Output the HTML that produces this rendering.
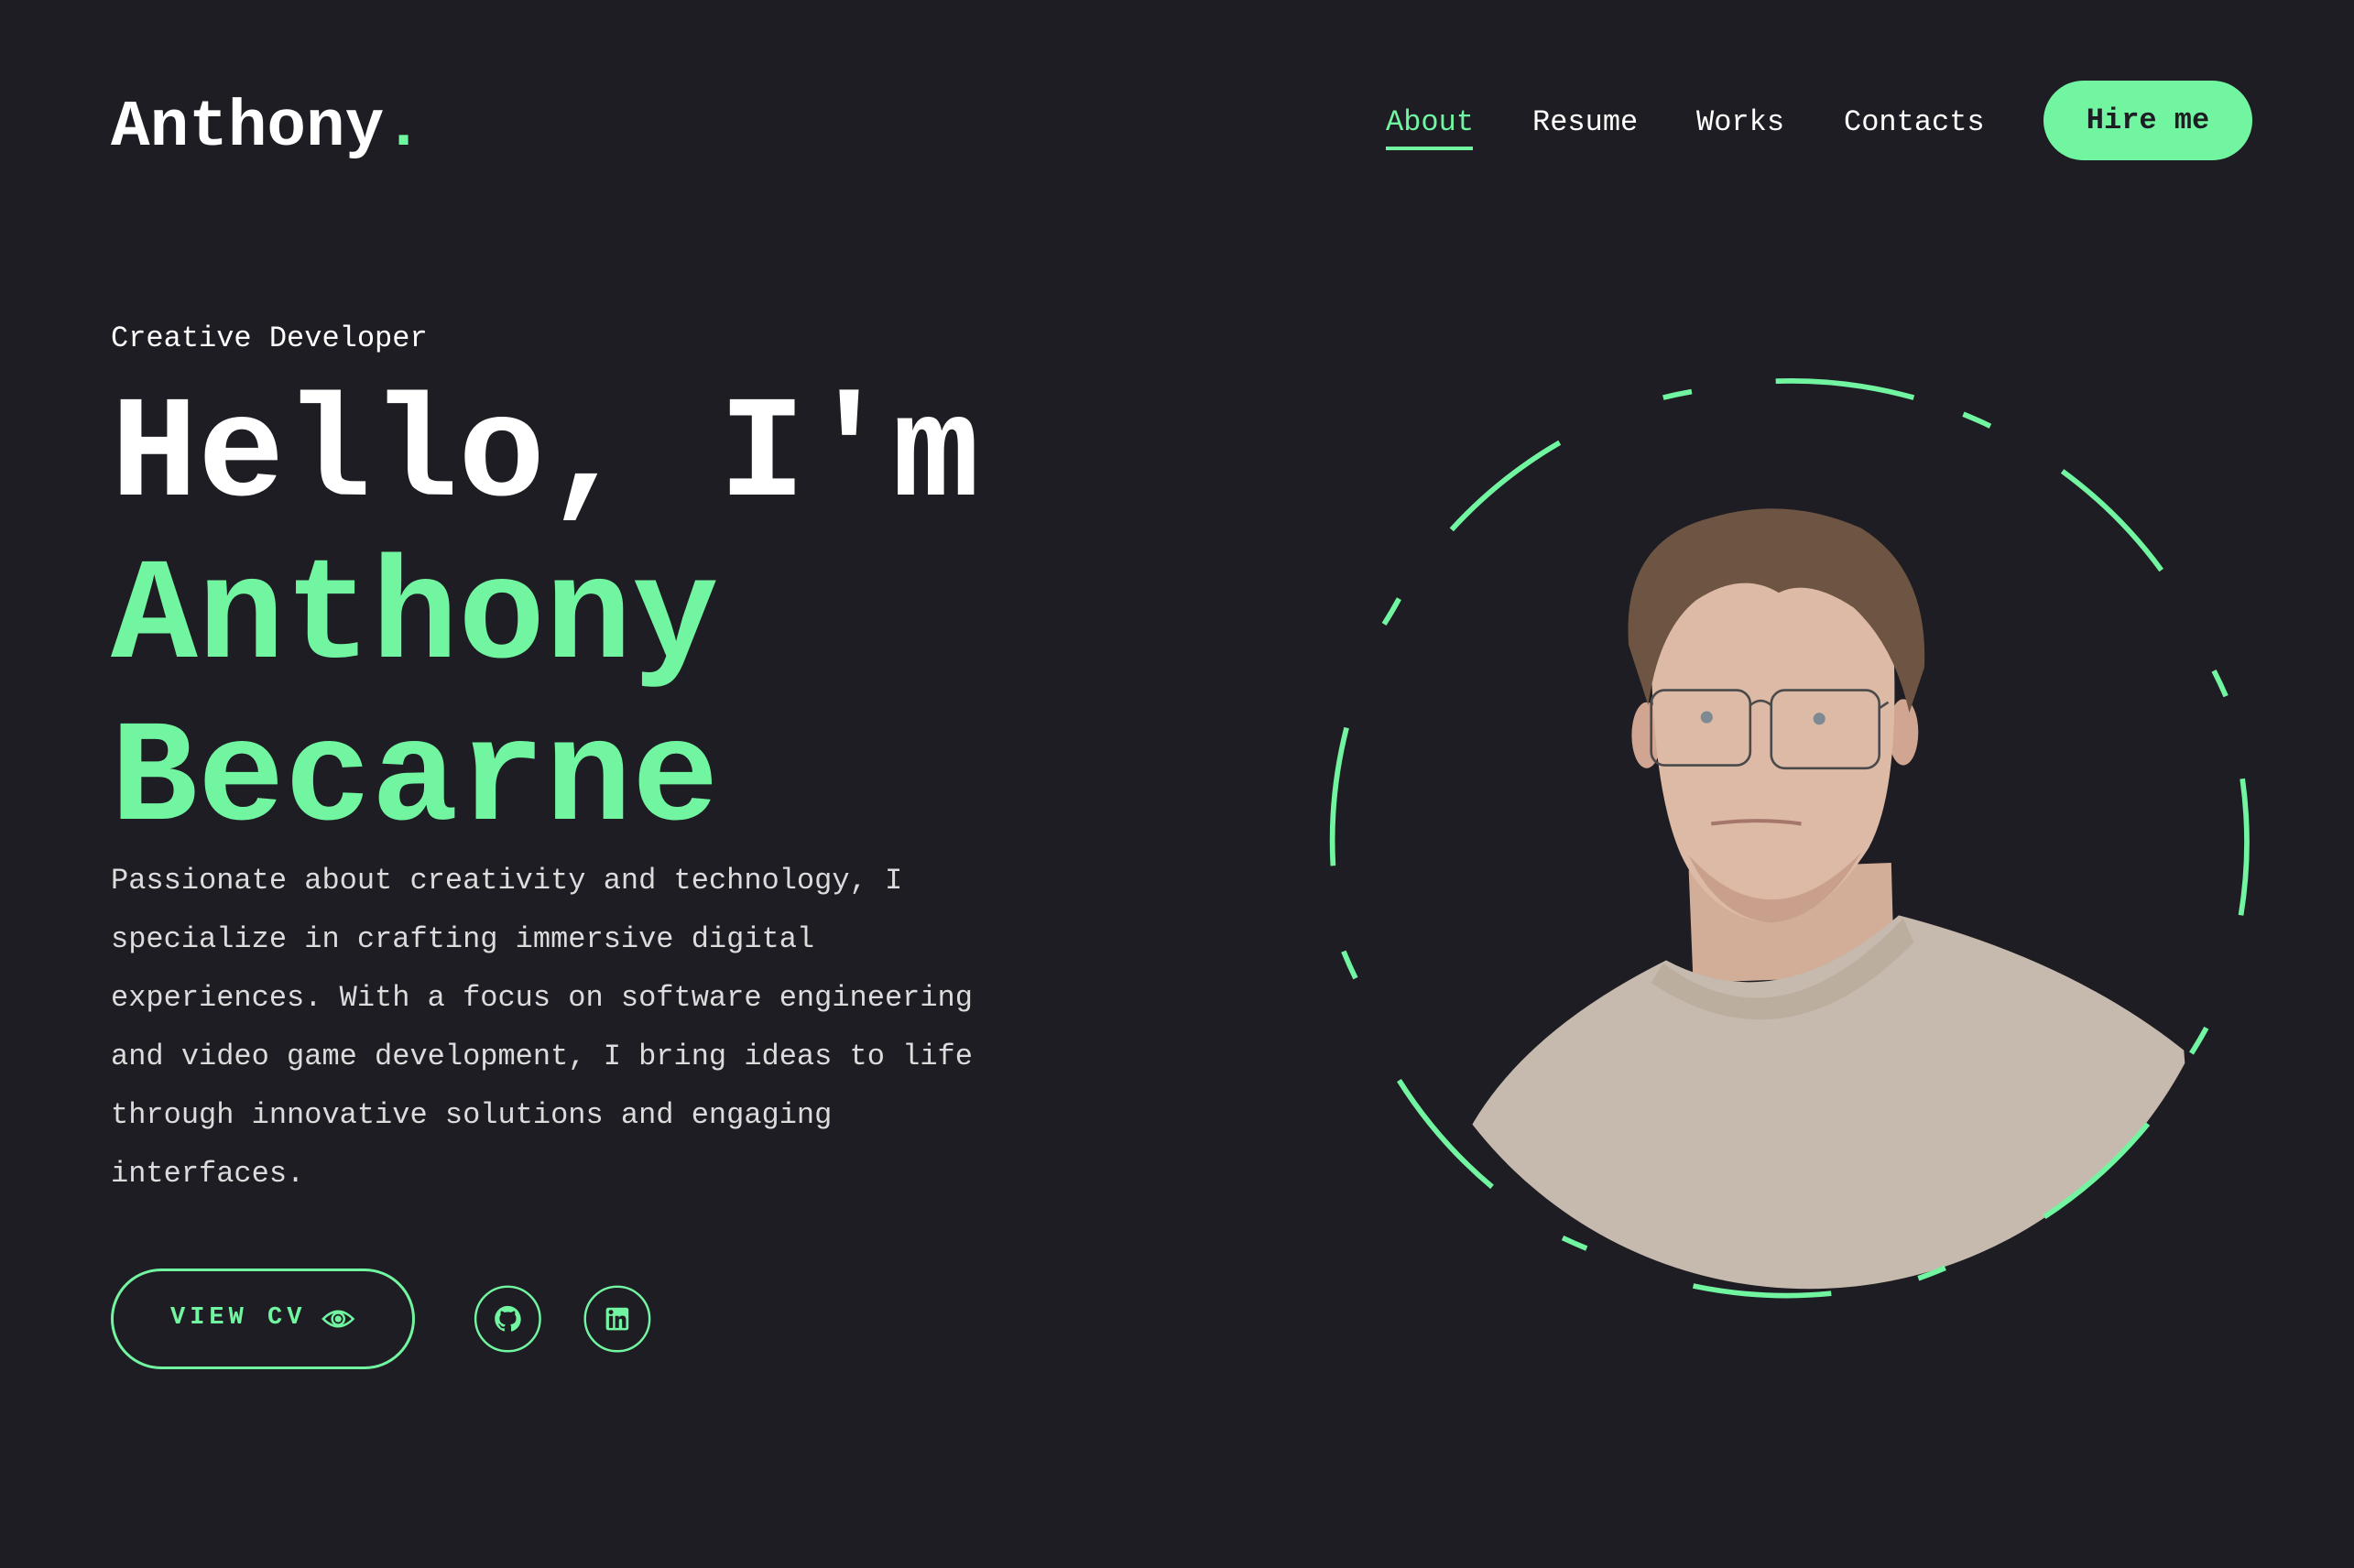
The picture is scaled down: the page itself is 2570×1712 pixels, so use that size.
<!DOCTYPE html>
<html><head><meta charset="utf-8"><style>
html,body{margin:0;padding:0;background:#1d1d23;}
body{width:2570px;height:1712px;position:relative;overflow:hidden;font-family:"Liberation Mono","DejaVu Sans Mono",monospace;color:#fff;}
.a{position:absolute;white-space:nowrap;line-height:1;}
.g{color:#72f5a1;}
</style></head><body>
<div class="a" style="left:121px;top:105px;font-size:71px;font-weight:bold;">Anthony<span class="g">.</span></div>
<div class="a g" style="left:1513px;top:118px;font-size:32px;">About</div>
<div style="position:absolute;left:1513px;top:160px;width:95px;height:4px;background:#72f5a1"></div>
<div class="a" style="left:1673px;top:118px;font-size:32px;">Resume</div>
<div class="a" style="left:1852px;top:118px;font-size:32px;">Works</div>
<div class="a" style="left:2013px;top:118px;font-size:32px;">Contacts</div>
<div style="position:absolute;left:2231px;top:88px;width:228px;height:87px;border-radius:44px;background:#72f5a1;color:#1d1d23;font-size:32px;font-weight:bold;display:flex;align-items:center;justify-content:center;">Hire me</div>

<div class="a" style="left:121px;top:354px;font-size:32px;">Creative Developer</div>
<div class="a" style="left:121px;top:420px;font-size:158px;font-weight:bold;">Hello, I'm</div>
<div class="a g" style="left:121px;top:597px;font-size:158px;font-weight:bold;">Anthony</div>
<div class="a g" style="left:121px;top:774px;font-size:158px;font-weight:bold;">Becarne</div>
<div style="position:absolute;left:121px;top:930px;font-size:32px;line-height:64px;color:#dcdcdc;white-space:nowrap;">Passionate about creativity and technology, I<br>specialize in crafting immersive digital<br>experiences. With a focus on software engineering<br>and video game development, I bring ideas to life<br>through innovative solutions and engaging<br>interfaces.</div>

<div style="position:absolute;left:121px;top:1385px;width:326px;height:104px;border:3px solid #72f5a1;border-radius:56px;"></div>
<div class="a g" style="left:186px;top:1426px;font-size:27px;font-weight:bold;letter-spacing:5px;">VIEW CV</div>

<svg style="position:absolute;left:0;top:0" width="2570" height="1712" viewBox="0 0 1568 1045">
  <defs>
    <clipPath id="cp"><circle cx="1205" cy="575" r="284"/></clipPath>
  </defs>
  <g fill="none" stroke="#72f5a1" stroke-width="1.5">
    <path d="M215 879 Q225 869 235 879 Q225 889 215 879 Z"/>
    <circle cx="225" cy="879" r="4"/>
  </g>
  <circle cx="225" cy="879" r="2.2" fill="#72f5a1"/>
  <circle cx="338" cy="879" r="21.5" fill="none" stroke="#72f5a1" stroke-width="1.5"/>
  <circle cx="411" cy="879" r="21.5" fill="none" stroke="#72f5a1" stroke-width="1.5"/>
  <g transform="translate(329,870) scale(0.75)" fill="#72f5a1">
    <path d="M12 .5C5.6.5.5 5.6.5 12c0 5.1 3.3 9.4 7.9 10.9.6.1.8-.2.8-.6v-2c-3.2.7-3.900-1.500-3.900-1.500-.5-1.300-1.300-1.700-1.300-1.700-1-.7.1-.7.1-.7 1.200.1 1.800 1.200 1.800 1.200 1 1.800 2.700 1.300 3.400 1 .1-.8.4-1.300.7-1.600-2.600-.3-5.300-1.300-5.300-5.700 0-1.300.5-2.300 1.200-3.100-.1-.3-.5-1.500.1-3.100 0 0 1-.3 3.200 1.200.9-.3 1.900-.4 2.900-.4s2 .1 2.900.4c2.200-1.500 3.200-1.200 3.200-1.200.6 1.600.2 2.800.1 3.100.7.8 1.200 1.800 1.200 3.100 0 4.400-2.700 5.400-5.300 5.700.4.4.8 1.100.8 2.200v3.300c0 .3.2.7.8.6 4.600-1.500 7.900-5.800 7.900-10.900C23.500 5.600 18.400.5 12 .5z"/>
  </g>
  <rect x="403.5" y="871.5" width="15" height="15" rx="1.5" fill="#72f5a1"/>
  <g fill="#1d1d23">
    <rect x="405.5" y="877" width="2.6" height="8"/>
    <circle cx="406.8" cy="874.5" r="1.5"/>
    <path d="M409.6 877h2.4v1.1c.5-.8 1.3-1.3 2.4-1.3 1.9 0 2.4 1.2 2.4 2.9V885h-2.6v-4.7c0-.9-.3-1.4-1-1.4-.8 0-1.1.6-1.1 1.4V885h-2.5z"/>
  </g>

  <g clip-path="url(#cp)">
    <rect x="900" y="280" width="620" height="600" fill="#1d1d23"/>
    <path d="M1125 580 L1260 575 L1262 650 L1128 655 Z" fill="#d2ad98"/>
    <path d="M1110 640 Q1185 680 1265 610 Q1380 640 1455 700 L1470 900 L950 900 L975 760 Q1010 690 1110 640 Z" fill="#c6b9ad"/>
    <path d="M1108 642 Q1185 700 1268 612 L1275 628 Q1190 715 1100 655 Z" fill="#bcae9f"/>
    <ellipse cx="1097" cy="490" rx="10" ry="22" fill="#d0a591"/>
    <ellipse cx="1268" cy="488" rx="10" ry="22" fill="#d0a591"/>
    <path d="M1100 440 Q1100 380 1180 375 Q1262 378 1262 445 Q1264 530 1245 565 Q1215 612 1180 615 Q1140 612 1120 570 Q1102 530 1100 440 Z" fill="#ddbaa6"/>
    <path d="M1125 570 Q1180 630 1240 568 Q1215 612 1180 615 Q1145 612 1125 570Z" fill="#c9a08b"/>
    <path d="M1085 430 Q1080 360 1140 345 Q1190 330 1240 352 Q1285 380 1282 445 L1272 475 Q1262 430 1235 405 Q1205 385 1185 395 Q1160 380 1130 400 Q1105 420 1098 470 Z" fill="#6e5442"/>
    <g fill="none" stroke="#4a4a4a" stroke-width="1.6">
      <rect x="1100" y="460" width="66" height="50" rx="9"/>
      <rect x="1180" y="460" width="72" height="52" rx="9"/>
      <path d="M1166 470 Q1173 464 1180 470 M1252 472 L1258 468"/>
    </g>
    <g fill="#7d8a92"><circle cx="1137" cy="478" r="4"/><circle cx="1212" cy="479" r="4"/></g>
    <path d="M1140 549 Q1172 545 1200 549" stroke="#a5766a" stroke-width="2.5" fill="none"/>
  </g>

  <g fill="none" stroke="#72f5a1" stroke-width="3.5">
    <path d="M1108 265 A305 305 0 0 1 1127 261"/>
    <path d="M1183 254 A305 305 0 0 1 1275 265"/>
    <path d="M1308 276 A305 305 0 0 1 1326 284"/>
    <path d="M1374 314 A305 305 0 0 1 1440 380"/>
    <path d="M1475 447 A305 305 0 0 1 1483 464"/>
    <path d="M1494 519 A305 305 0 0 1 1493 610"/>
    <path d="M1470 685 A305 305 0 0 1 1460 702"/>
    <path d="M1431 749 A305 305 0 0 1 1362 811"/>
    <path d="M1296 845 A305 305 0 0 1 1278 852"/>
    <path d="M1220 862 A305 305 0 0 1 1128 857"/>
    <path d="M1057 832 A305 305 0 0 1 1041 825"/>
    <path d="M994 791 A305 305 0 0 1 932 720"/>
    <path d="M903 652 A305 305 0 0 1 895 634"/>
    <path d="M888 577 A305 305 0 0 1 897 485"/>
    <path d="M932 399 A305 305 0 0 1 922 416"/>
    <path d="M967 353 A305 305 0 0 1 1039 295"/>
  </g>
</svg>
</body></html>
